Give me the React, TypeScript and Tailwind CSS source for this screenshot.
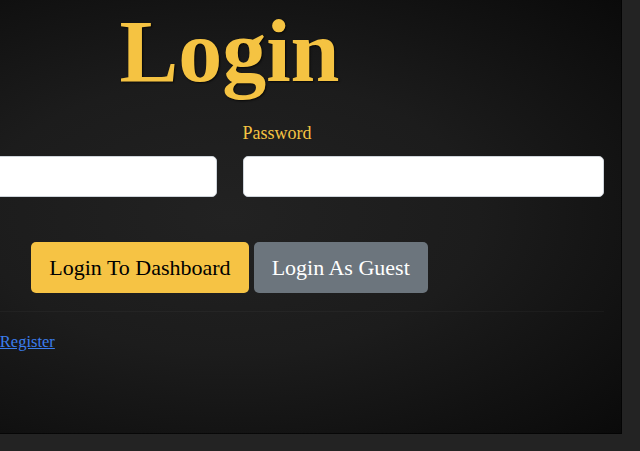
export default function App() {
  return (
    <div className="min-h-screen bg-[#232323] overflow-hidden font-['Liberation_Serif',serif]">
      <div className="ml-[-162px] w-[784px] h-[434px] px-[17px] pt-[8px] flex flex-col bg-[radial-gradient(ellipse_at_center,#222222_0%,#1c1c1c_45%,#0a0a0a_100%)] border-r border-b border-black/60">
        <h1 className="text-center text-[88px] leading-none font-bold text-[#f5c342] [text-shadow:1px_1px_2px_rgba(0,0,0,0.7)]">
          Login
        </h1>

        <form className="mt-[28px] flex flex-col">
          <div className="grid grid-cols-2 gap-[26px]">
            <div className="flex flex-col">
              <label className="text-[18px] leading-none text-[#f5c342] mb-[14px]">Email</label>
              <input type="email" className="h-[41px] bg-white border border-[#ced4da] rounded-[5px]" />
            </div>
            <div className="flex flex-col">
              <label className="text-[18px] leading-none text-[#f5c342] mb-[14px]">Password</label>
              <input type="password" className="h-[41px] bg-white border border-[#ced4da] rounded-[5px]" />
            </div>
          </div>

          <div className="mt-[45px] flex justify-center gap-[5px]">
            <button type="button" className="h-[51px] px-[18px] rounded-[5px] bg-[#f6c344] text-black text-[22px]">
              Login To Dashboard
            </button>
            <button type="button" className="h-[51px] px-[18px] rounded-[5px] bg-[#6c757d] text-white text-[22px]">
              Login As Guest
            </button>
          </div>

          <div className="mt-[18px] border-t border-white/[0.03]" />

          <p className="mt-[18px] ml-[-13px] text-[16.5px] leading-[24px] text-[#d0d0d0]">
            Don't have an account?{" "}
            <a href="#" className="text-[#3b7ded] underline">Register</a>
          </p>
        </form>
      </div>
    </div>
  );
}
